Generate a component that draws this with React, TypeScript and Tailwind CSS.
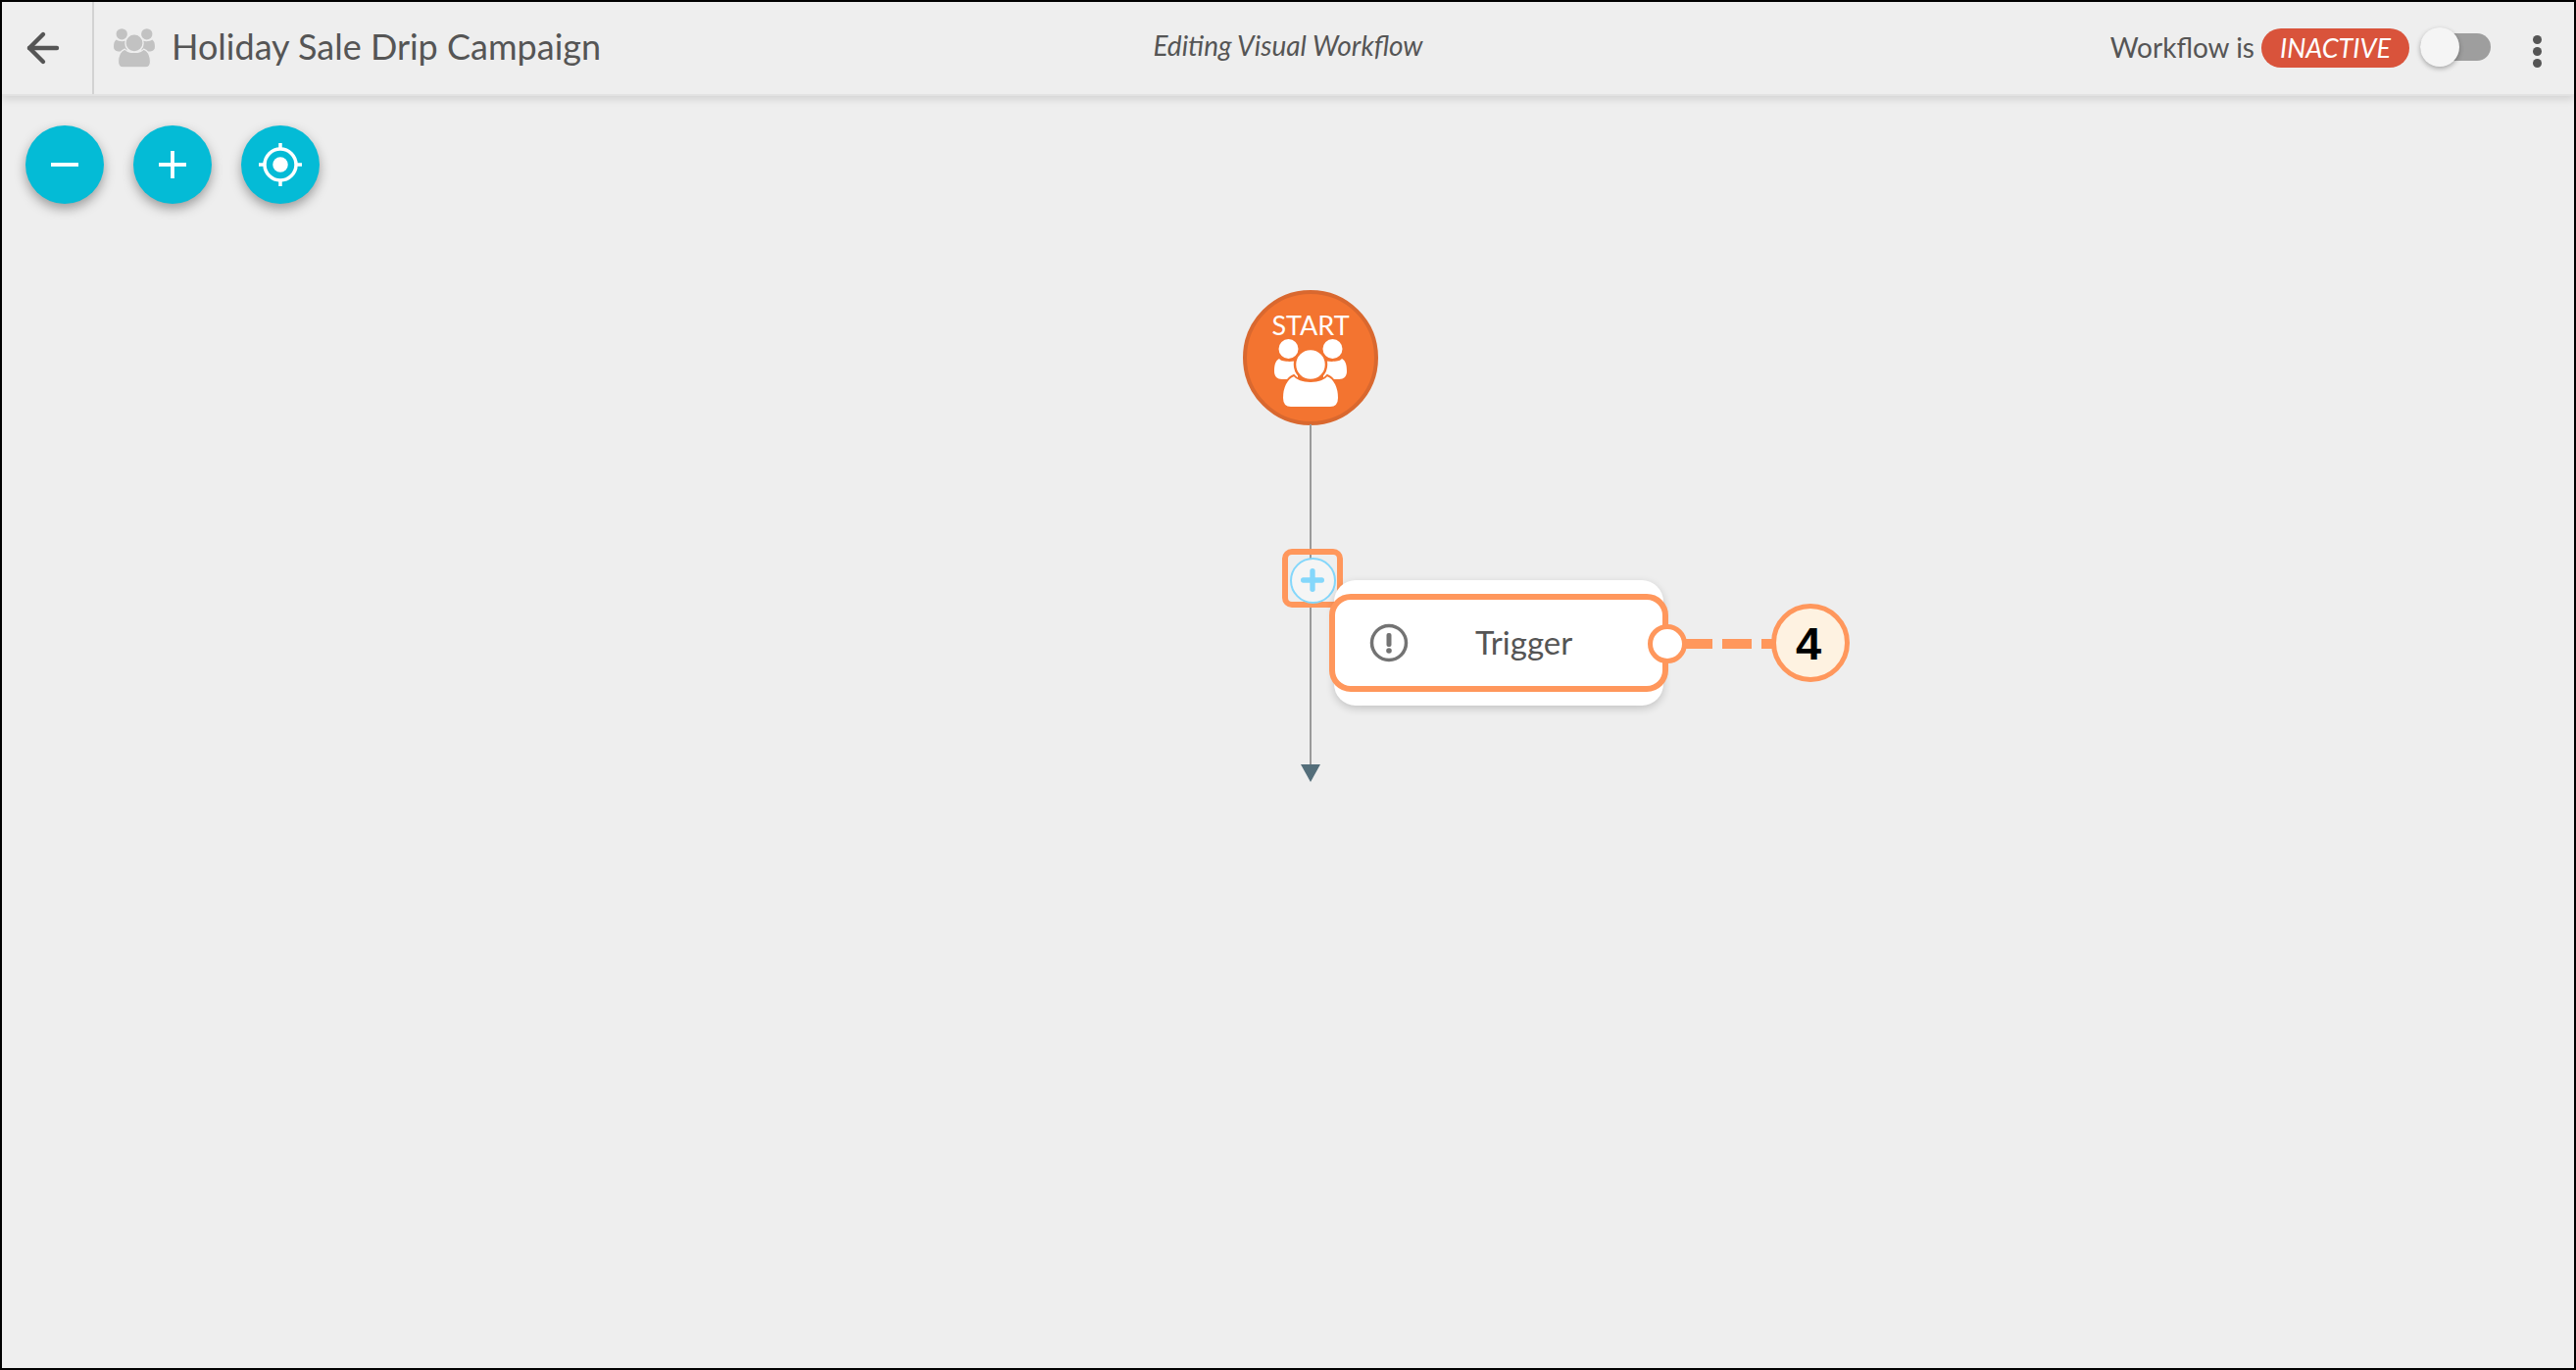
import { ArrowLeft, Minus, Plus } from "lucide-react";

const GroupIcon = ({ className, stroke }: { className: string; stroke: string }) => (
	<svg viewBox="0 0 74 70" className={className} fill="currentColor">
		<circle cx="14.5" cy="10" r="10" />
		<circle cx="59.5" cy="10" r="10" />
		<path d="M5 20 C8 24 20 23 24 22 V41 H8 C3 41 0 38 0 33 C0 27 1 22 5 20 Z" />
		<path d="M69 20 C66 24 54 23 50 22 V41 H66 C71 41 74 38 74 33 C74 27 73 22 69 20 Z" />
		<path
			d="M20 37 C24 42 30 43 37 43 C44 43 50 42 54 37 C62 40 66 50 66 60 C66 67 62 70 57 70 H17 C12 70 8 67 8 60 C8 50 12 40 20 37 Z"
			stroke={stroke}
			strokeWidth="2"
		/>
		<circle cx="37" cy="26" r="16" stroke={stroke} strokeWidth="2.5" />
	</svg>
);

const TargetIcon = () => (
	<svg viewBox="0 0 44 44" className="h-11 w-11" fill="none" stroke="white">
		<circle cx="22" cy="22" r="16" strokeWidth="3.5" />
		<circle cx="22" cy="22" r="7.75" fill="white" stroke="none" />
		<path d="M22 0V6M22 38V44M0 22H6M38 22H44" strokeWidth="3.5" />
	</svg>
);

const RoundButton = ({ children }: { children: React.ReactNode }) => (
	<button className="flex h-20 w-20 items-center justify-center rounded-full bg-[#04bbd6] text-white shadow-[0_5px_12px_rgba(0,0,0,0.35)]">
		{children}
	</button>
);

export default function App() {
	return (
		<div className="flex h-[1398px] w-[2628px] flex-col overflow-hidden border-2 border-black bg-[#eeeeee] font-['Lato','Open_Sans',sans-serif] text-[#555555]">
			{/* Header */}
			<header className="relative z-10 grid h-[96px] shrink-0 grid-cols-[1fr_auto_1fr] items-center border-b-2 border-[#e2e2e2] bg-[#eeeeee] shadow-[0_3px_8px_rgba(0,0,0,0.12)]">
				<div className="flex h-full items-center">
					<div className="flex h-full w-[94px] shrink-0 items-center border-r-2 border-[#d2d2d2] pl-[18px]">
						<ArrowLeft className="h-12 w-12 text-[#555555]" strokeWidth={2.2} />
					</div>
					<GroupIcon className="ml-5 h-10 w-[42px] text-[#c2c2c2]" stroke="#eeeeee" />
					<h1 className="-mt-1 ml-[17px] text-[36px] leading-none font-normal whitespace-nowrap">
						Holiday Sale Drip Campaign
					</h1>
				</div>
				<div className="-mt-[6px] text-[28px] italic">Editing Visual Workflow</div>
				<div className="flex items-center justify-end">
					<span className="-mt-[2px] text-[28px]">Workflow is</span>
					<span className="ml-[7px] flex h-10 w-[151px] items-center justify-center rounded-full bg-[#d9533b] text-[27px] text-white italic">
						INACTIVE
					</span>
					<div className="relative -mt-[2px] ml-[11px] h-7 w-[72px] rounded-full bg-[#9e9e9e]">
						<div className="absolute top-[-6px] left-0 h-10 w-10 rounded-full bg-[#f5f5f5] shadow-[0_2px_5px_rgba(0,0,0,0.3)]" />
					</div>
					<div className="mt-[6px] mr-[33px] ml-[43px] flex flex-col gap-[3px]">
						<span className="h-[9px] w-[9px] rounded-full bg-[#555555]" />
						<span className="h-[9px] w-[9px] rounded-full bg-[#555555]" />
						<span className="h-[9px] w-[9px] rounded-full bg-[#555555]" />
					</div>
				</div>
			</header>

			{/* Canvas */}
			<main className="relative flex-1">
				<div className="flex gap-[30px] pt-[30px] pl-6">
					<RoundButton>
						<Minus className="h-12 w-12 [stroke-linecap:butt]" strokeWidth={1.9} />
					</RoundButton>
					<RoundButton>
						<Plus className="h-12 w-12 [stroke-linecap:butt]" strokeWidth={1.9} />
					</RoundButton>
					<RoundButton>
						<TargetIcon />
					</RoundButton>
				</div>

				{/* Start node */}
				<div className="absolute top-[198px] left-[1266px] h-[138px] w-[138px] rounded-full border-4 border-[#d9682f] bg-[#f37430] text-white">
					<div className="mt-[20px] text-center text-[27px] leading-[24px]">START</div>
					<GroupIcon className="mx-auto mt-[2px] h-[70px] w-[74px] text-white" stroke="#f37430" />
				</div>

				{/* Connector */}
				<div className="absolute top-[335px] left-[1334px] h-[347px] w-[2px] bg-[#9a9a9a]" />
				<div className="absolute top-[682px] left-[1325px] h-0 w-0 border-x-[10px] border-t-[18px] border-x-transparent border-t-[#546e7a]" />

				{/* Add step */}
				<div className="absolute top-[462px] left-[1306px] flex h-[60px] w-[62px] items-center justify-center rounded-[10px] border-[6px] border-[#ff975c]">
					<div className="mt-1 flex h-[47px] w-[47px] shrink-0 items-center justify-center rounded-full border-2 border-[#84d7fb] bg-[#f5f5f5]">
						<Plus className="h-8 w-8 text-[#84d7fb]" strokeWidth={4} />
					</div>
				</div>

				{/* Trigger card */}
				<div className="absolute top-[494px] left-[1359px] h-[128px] w-[336px] rounded-[22px] bg-white shadow-[0_3px_8px_rgba(0,0,0,0.18)]" />
				<div className="absolute top-[508px] left-[1354px] flex h-[100px] w-[346px] items-center rounded-[22px] border-[6px] border-[#ff975c] bg-white pl-[35px]">
					<svg viewBox="0 0 40 40" className="h-10 w-10 text-[#737373]" fill="none">
						<circle cx="20" cy="20" r="17.5" stroke="currentColor" strokeWidth="3.5" />
						<rect x="17.5" y="10" width="5" height="14" rx="2" fill="currentColor" />
						<circle cx="20" cy="28" r="2.8" fill="currentColor" />
					</svg>
					<span className="ml-[68px] text-[33px] text-[#555555]">Trigger</span>
				</div>

				{/* Callout */}
				<div className="absolute top-[539px] left-[1679px] h-10 w-10 rounded-full border-[5px] border-[#ff975c] bg-white" />
				<div className="absolute top-[554px] left-[1718px] flex h-[10px] w-[90px] gap-[10px]">
					<span className="h-full w-[27px] bg-[#ff975c]" />
					<span className="h-full w-[30px] bg-[#ff975c]" />
					<span className="h-full w-[11px] bg-[#ff975c]" />
				</div>
				<div className="absolute top-[518px] left-[1805px] flex h-20 w-20 items-center justify-center rounded-full border-[5px] border-[#ff975c] bg-[#fef2e1] pr-1 font-['Liberation_Sans',sans-serif] text-[47px] leading-none font-bold text-black">
					4
				</div>
			</main>
		</div>
	);
}
